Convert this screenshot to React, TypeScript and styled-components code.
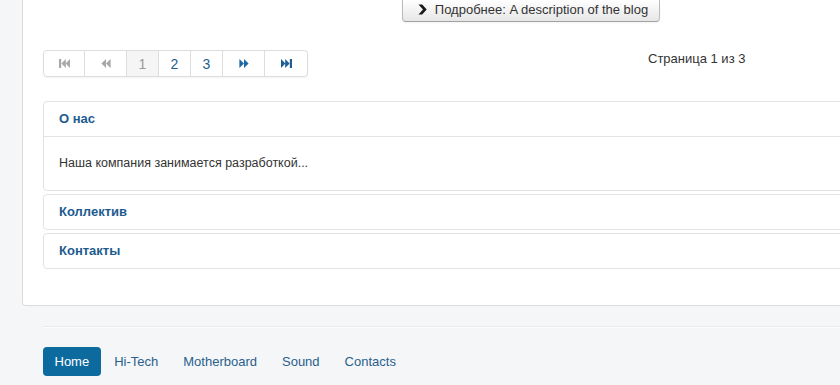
import React from 'react'
import styled, { createGlobalStyle } from 'styled-components'

const GlobalStyle = createGlobalStyle`
  html, body {
    margin: 0;
    padding: 0;
    overflow: hidden;
    background: #f4f6f7;
  }
  body {
    font-family: "Liberation Sans", Arial, Helvetica, sans-serif;
    font-size: 13px;
    line-height: 18px;
    color: #333;
  }
`

const Page = styled.div`
  width: 1040px;
  padding-left: 22px;
`

const Card = styled.div`
  width: 1018px;
  box-sizing: border-box;
  background: #fff;
  border: 1px solid #dcdcdc;
  border-top: 0;
  border-radius: 0 0 4px 4px;
  padding: 0 20px 36px;
`

const ReadMoreRow = styled.div`
  display: flex;
  justify-content: center;
`

const ReadMore = styled.a`
  display: flex;
  align-items: center;
  gap: 8px;
  height: 22px;
  box-sizing: border-box;
  padding: 0 11px 2px 15px;
  background: linear-gradient(#ffffff, #e6e6e6);
  border: 1px solid #bbb;
  border-top: 0;
  border-bottom-color: #a2a2a2;
  border-radius: 0 0 4px 4px;
  color: #333;
  font-size: 13px;
  box-shadow: inset 0 1px 0 rgba(255, 255, 255, 0.2), 0 1px 2px rgba(0, 0, 0, 0.05);
`

const PaginationRow = styled.div`
  display: flex;
  align-items: flex-start;
  margin-top: 28px;
`

const Pager = styled.ul`
  display: flex;
  margin: 0;
  padding: 0;
  list-style: none;
  border-radius: 4px;
  box-shadow: 0 1px 2px rgba(0, 0, 0, 0.05);
`

const PageItem = styled.li<{ $wide?: boolean; $active?: boolean; $disabled?: boolean }>`
  display: flex;
  align-items: center;
  justify-content: center;
  width: ${p => (p.$wide ? '42px' : '32px')};
  height: 27px;
  box-sizing: border-box;
  border: 1px solid #ddd;
  border-left-width: 0;
  background: ${p => (p.$active ? '#f5f5f5' : '#fff')};
  color: ${p => (p.$active || p.$disabled ? '#999' : '#1f5f93')};
  font-size: 14px;

  &:first-child {
    border-left-width: 1px;
    border-radius: 4px 0 0 4px;
  }
  &:last-child {
    width: 43px;
    border-radius: 0 4px 4px 0;
  }
`

const Counter = styled.p`
  margin: 0 0 0 340px;
  color: #333;
  font-size: 13px;
`

const Panels = styled.div`
  display: flex;
  flex-direction: column;
  gap: 3px;
  margin-top: 24px;
`

const Panel = styled.div`
  border: 1px solid #e3e3e3;
  border-radius: 4px;
  margin-right: -30px;
`

const PanelHeading = styled.div<{ $open?: boolean }>`
  padding: 8px 15px;
  height: 18px;
  font-weight: bold;
  font-size: 13px;
  color: #1d5b8f;
  border-bottom: ${p => (p.$open ? '1px solid #e3e3e3' : '0')};
`

const PanelBody = styled.div`
  padding: 17px 15px 18px;
  font-size: 12.5px;
  color: #333;
`

const FooterArea = styled.div`
  padding: 20px 0 0 43px;
`

const Rule = styled.hr`
  margin: 0;
  border: 0;
  border-top: 1px solid #e9ecee;
  border-bottom: 1px solid #fbfcfc;
`

const Nav = styled.ul`
  display: flex;
  gap: 2px;
  margin: 19px 0 0;
  padding: 0;
  list-style: none;
`

const NavPill = styled.li<{ $active?: boolean }>`
  padding: 6px 11.5px 5px;
  line-height: 18px;
  font-size: 13px;
  border-radius: 4px;
  background: ${p => (p.$active ? '#0c6a9e' : 'transparent')};
  color: ${p => (p.$active ? '#fff' : '#2a5f8d')};
`

const Chevron = () => (
  <svg width="9" height="11" viewBox="0 0 9 11">
    <path d="M0.5 0.5 L4.2 0.5 L8.7 5.5 L4.2 10.5 L0.5 10.5 L5 5.5 Z" fill="#1a1a1a" />
  </svg>
)

const Tri = ({ dir, bar, color }: { dir: 'l' | 'r'; bar?: boolean; color: string }) => {
  const w = bar ? 11 : 10
  const left = (
    <>
      {bar && <rect x="0" y="0" width="2.2" height="9" />}
      <path d={bar ? 'M6.8 0 L2.4 4.5 L6.8 9 Z' : 'M5 0 L0.4 4.5 L5 9 Z'} />
      <path d={bar ? 'M11 0 L6.6 4.5 L11 9 Z' : 'M9.6 0 L5 4.5 L9.6 9 Z'} />
    </>
  )
  return (
    <svg width={w} height="9" viewBox={`0 0 ${w} 9`} fill={color}>
      <g transform={dir === 'r' ? `translate(${w} 0) scale(-1 1)` : undefined}>{left}</g>
    </svg>
  )
}

const App: React.FC = () => {
  return (
    <>
      <GlobalStyle />
      <Page>
        <Card>
          <ReadMoreRow>
            <ReadMore>
              <Chevron />
              Подробнее: A description of the blog
            </ReadMore>
          </ReadMoreRow>

          <PaginationRow>
            <Pager>
              <PageItem $wide $disabled><Tri dir="l" bar color="#a8a8a8" /></PageItem>
              <PageItem $wide $disabled><Tri dir="l" color="#a8a8a8" /></PageItem>
              <PageItem $active>1</PageItem>
              <PageItem>2</PageItem>
              <PageItem>3</PageItem>
              <PageItem $wide><Tri dir="r" color="#1f6aa5" /></PageItem>
              <PageItem $wide><Tri dir="r" bar color="#1f5f93" /></PageItem>
            </Pager>
            <Counter>Страница 1 из 3</Counter>
          </PaginationRow>

          <Panels>
            <Panel>
              <PanelHeading $open>О нас</PanelHeading>
              <PanelBody>Наша компания занимается разработкой...</PanelBody>
            </Panel>
            <Panel>
              <PanelHeading>Коллектив</PanelHeading>
            </Panel>
            <Panel>
              <PanelHeading>Контакты</PanelHeading>
            </Panel>
          </Panels>
        </Card>
      </Page>

      <FooterArea>
        <Rule />
        <Nav>
          <NavPill $active>Home</NavPill>
          <NavPill>Hi-Tech</NavPill>
          <NavPill>Motherboard</NavPill>
          <NavPill>Sound</NavPill>
          <NavPill>Contacts</NavPill>
        </Nav>
      </FooterArea>
    </>
  )
}

export default App
